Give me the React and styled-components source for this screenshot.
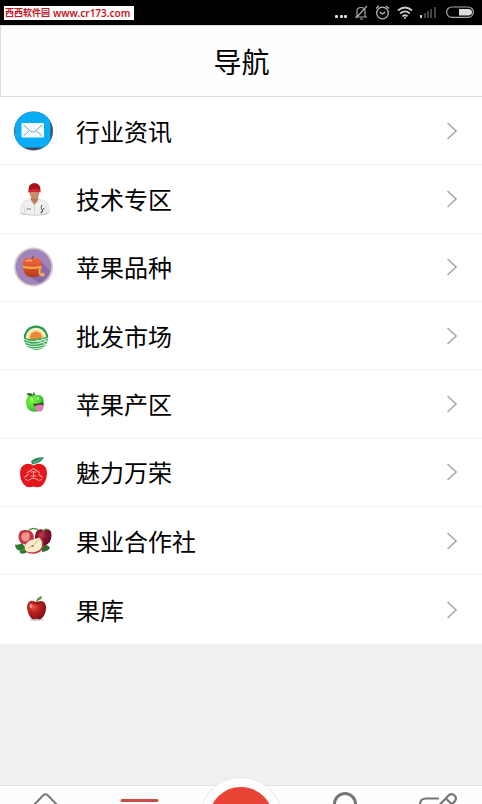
import React from 'react';
import styled, { createGlobalStyle } from 'styled-components';

const GlobalStyle = createGlobalStyle`
  * {
    box-sizing: border-box;
  }
  body {
    margin: 0;
    background-color: #f0f0f0;
    color: #000;
    font-family: 'Noto Sans CJK SC', 'Noto Sans', sans-serif;
  }
  ul,
  h1,
  p {
    margin: 0;
    padding: 0;
  }
`;

const Page = styled.div`
  display: flex;
  flex-direction: column;
  height: 100vh;
  overflow: hidden;
`;

const StatusBar = styled.div`
  display: flex;
  flex-shrink: 0;
  align-items: center;
  justify-content: space-between;
  height: 25px;
  padding: 0 8px 0 4px;
  background-color: #000;
`;

const SiteTag = styled.p`
  display: flex;
  gap: 3px;
  padding: 0 4px 0 1px;
  background-color: #fff;
  color: #c4161c;
  font-family: 'Noto Sans', 'Noto Sans CJK SC', sans-serif;
  font-size: 10px;
  font-weight: 600;
  line-height: 14px;
  white-space: nowrap;
`;

const SiteName = styled.span`
  font-size: 9px;
`;

const StatusIcons = styled.div`
  display: flex;
  align-items: center;
  gap: 7px;
  svg {
    display: block;
  }
`;

const Header = styled.header`
  display: flex;
  flex-shrink: 0;
  align-items: center;
  justify-content: center;
  height: 72px;
  border: 1px solid #dedede;
  border-right: 0;
  background-color: #fefefe;
`;

const Title = styled.h1`
  font-size: 28px;
  font-weight: 400;
  line-height: 40px;
`;

const Main = styled.main`
  flex: 1;
  min-height: 0;
`;

const MenuList = styled.ul`
  display: grid;
  grid-auto-rows: 1fr;
  min-height: 68vh;
  list-style: none;
  background-color: #fff;
`;

const MenuItem = styled.li`
  display: flex;
  border-bottom: 1px solid #efefef;
  &:last-child {
    border-bottom: 0;
  }
`;

const MenuLink = styled.a`
  display: flex;
  flex: 1;
  align-items: center;
  gap: 22px;
  padding: 0 24px 0 14px;
  color: inherit;
  font-size: 24px;
  line-height: 36px;
  text-decoration: none;
  svg {
    flex-shrink: 0;
  }
`;

const MenuName = styled.span`
  flex: 1;
`;

// 아래쪽은 화면 밖으로 이어진다
const TabBar = styled.nav`
  display: grid;
  flex-shrink: 0;
  grid-template-columns: 1fr 1fr 112px 1fr 1fr;
  justify-items: center;
  align-items: start;
  height: 68px;
  margin-bottom: -49px;
  border-top: 1px solid #e2e2e2;
  background-color: #fefefe;
`;

const TabButton = styled.button`
  padding: 6px 0 0;
  border: 0;
  background: none;
  svg {
    display: block;
  }
`;

const CenterButton = styled.button`
  width: 82px;
  height: 82px;
  margin-top: -8px;
  padding: 0;
  border: 9px solid #fefefe;
  border-radius: 50%;
  background-color: #e94335;
  box-shadow: 0 0 0 1px #e9e9e9;
`;

function MailIcon() {
  return (
    <svg width='40' height='40' viewBox='0 0 40 40' aria-hidden='true'>
      <defs>
        <clipPath id='mail-round'>
          <circle cx='19.500' cy='20' r='19.500' />
        </clipPath>
      </defs>
      <g clipPath='url(#mail-round)'>
        <rect width='40' height='40' fill='#3f4d5c' />
        <rect x='1' y='1' width='35.500' height='35.500' fill='#0aadf5' />
        <rect x='7.500' y='12' width='22.500' height='14.500' rx='1' fill='#f4fbff' />
        <path
          d='M9.500 14l7 6.300q2.300 1.800 4.600 0l7-6.300M9.500 24.800l6-5M28.100 24.800l-6-5'
          fill='none'
          stroke='#6d9cb5'
          strokeWidth='0.900'
        />
      </g>
    </svg>
  );
}

function ExpertIcon() {
  return (
    <svg width='40' height='40' viewBox='0 0 40 40' aria-hidden='true'>
      <ellipse cx='20.500' cy='34' rx='14' ry='2.500' fill='#b4b4b4' />
      <path
        d='M6.500 33.500q-.5-7.500 3-11L17 19h7l7.500 3.500q4 3.500 3.500 11-6 2.500-14.500 2.500T6.500 33.500z'
        fill='#f0f0ee'
        stroke='#d6d6d4'
        strokeWidth='0.600'
      />
      <path d='M17 17h7v5l-3.500 4-3.500-4z' fill='#b97c58' />
      <path d='M16 20l4.500 6 4.500-6M20.500 26v9' fill='none' stroke='#ccc' strokeWidth='0.800' />
      <ellipse cx='20.500' cy='14' rx='4.800' ry='6' fill='#c98d66' />
      <path d='M14.500 13q-.8-8.500 6-9 6.800.5 6 9-6-2-12 0z' fill='#a90f1c' />
      <path d='M15 11q6-2.500 11 0l.5 2.500q-6-1.500-12 .2z' fill='#cf2630' />
      <path d='M12.500 30h4.500' stroke='#777' strokeWidth='1' />
      <path d='M28 26q-2 3 0 4.500t-1 4M30 29l-3 5' fill='none' stroke='#555' strokeWidth='1' />
      <path d='M10 27l1 7M31.500 26l1 7' stroke='#ccc' strokeWidth='0.700' />
    </svg>
  );
}

function VarietyIcon() {
  return (
    <svg width='40' height='40' viewBox='0 0 40 40' aria-hidden='true'>
      <defs>
        <linearGradient id='variety-apple' x1='0' y1='0' x2='0' y2='1'>
          <stop offset='0' stopColor='#ee6a3e' />
          <stop offset='.5' stopColor='#d8512c' />
          <stop offset='1' stopColor='#b23a1c' />
        </linearGradient>
      </defs>
      <circle cx='19.500' cy='20' r='19.500' fill='#d5c8c9' />
      <circle cx='19.500' cy='20' r='17.800' fill='#a084bb' />
      <path d='M25 12l11 12q-3 9-11 12L14 28z' fill='#8a6ba6' />
      <path
        d='M18.500 11.500q-6-2-8.500 1-2 3-1 8.500 1 6.500 5 8.500 5 1.500 9 0 4-2 4.500-8.500.8-6-1.500-8.500-3-3-7.500-1z'
        fill='url(#variety-apple)'
      />
      <path d='M18 12q0-2 2-2.500' fill='none' stroke='#7b2d1d' strokeWidth='1' />
      <path d='M12 14.500q3-2 6-.5' fill='none' stroke='#ffa98a' strokeWidth='1.500' />
      <path d='M8.800 18.500q9.200 2.500 18.500.3v2.200q-9.300 2.200-18.300 0z' fill='#f9ab42' />
      <path
        d='M27 20q-2 3-1.500 5.500t3.500 3.500M28 26l2.500 2.500'
        fill='none'
        stroke='#efae62'
        strokeWidth='1.800'
      />
    </svg>
  );
}

function MarketIcon() {
  return (
    <svg width='40' height='40' viewBox='0 0 40 40' aria-hidden='true'>
      <defs>
        <clipPath id='market-round'>
          <circle cx='22' cy='21.500' r='12.200' />
        </clipPath>
      </defs>
      <g clipPath='url(#market-round)'>
        <circle cx='22' cy='21.500' r='12.200' fill='#2b9a4b' />
        <circle cx='22' cy='22' r='10.200' fill='#f8f8d4' />
        <circle cx='22' cy='22' r='8.200' fill='#f9da8f' />
        <circle cx='22' cy='21.500' r='6' fill='#e88a3c' />
        <path d='M8 20.500q7 3.500 14 2.500t14-3V36H8z' fill='#34a853' />
        <path
          d='M8 22.500q8 4 14 3t14-4M9 25.500q8 4 14 2.500t13-4M10 28.500q7 3 13 2t12-3.500M13 31.500q6 2 11 1t9-3M22 24q7 2 12 6M27 22.500q5 2 8 4'
          fill='none'
          stroke='#effae9'
          strokeWidth='0.900'
        />
      </g>
    </svg>
  );
}

function OriginIcon() {
  return (
    <svg width='40' height='40' viewBox='0 0 40 40' aria-hidden='true'>
      <defs>
        <radialGradient id='origin-apple' cx='.35' cy='.35' r='.8'>
          <stop offset='0' stopColor='#8af548' />
          <stop offset='.6' stopColor='#41d42f' />
          <stop offset='1' stopColor='#1c9a2a' />
        </radialGradient>
      </defs>
      <path
        d='M20 11.500q-7-2-8 6 0 9 7 10 8 1 10-5 2-8-2-11-3-1-7 0z'
        fill='url(#origin-apple)'
      />
      <path d='M12.500 10q4-2.500 7 1.500-5 1.500-7-1.500zM19 11.500l.5-4 2 3.500z' fill='#2a6a2e' />
      <circle cx='18' cy='15' r='1.200' fill='#d8ffb0' />
      <circle cx='24' cy='14.500' r='1.200' fill='#b9f59a' />
      <path d='M19 19.500q5 1 10-1.500l.8 3.500q-5 2.500-9.300 1z' fill='#4d4038' />
      <path d='M21 22q4-2 8.500-1 .5 4-2 6-4 1.500-6-1.500z' fill='#d77fb4' />
    </svg>
  );
}

function CharmIcon() {
  return (
    <svg width='40' height='40' viewBox='0 0 40 40' aria-hidden='true'>
      <path
        d='M19.500 13.500q-3-2.500-7.500-1.500Q6 13.500 6 21.500q.5 9 6 13 4 1.500 7.500 0 4 1.500 7.500 0 5.500-4 6-13 0-8-6-9.500-4-1-7.500 1.500z'
        fill='#e2181e'
      />
      <path d='M19 12.500q-1-3 .5-4.500' fill='none' stroke='#3a7a48' strokeWidth='1' />
      <path d='M17 9.500q5-5 13-4-4 7-12 6.500z' fill='#2a8d5c' />
      <path d='M19 10.500q4-1 9-4' fill='none' stroke='#a6dcbf' strokeWidth='0.600' />
      <path
        d='M13 21l6.500-4.500L26 21M10.500 25.500l4-3.500M28.500 25.500l-4-3.500M17 20.500q2.500-2 5 0M16.500 24h6M19.500 19.500v6M15 28q4.500-3.500 9 0M11 27.500l3.500 1M28 27.500l-3.500 1'
        fill='none'
        stroke='#ff9a92'
        strokeWidth='1.100'
      />
    </svg>
  );
}

function CoopIcon() {
  return (
    <svg width='40' height='40' viewBox='0 0 40 40' aria-hidden='true'>
      <defs>
        <radialGradient id='coop-apple' cx='.4' cy='.35' r='.7'>
          <stop offset='0' stopColor='#c23a55' />
          <stop offset='.4' stopColor='#8c1430' />
          <stop offset='1' stopColor='#5c0c20' />
        </radialGradient>
      </defs>
      <path d='M1 23.500q4 1 7-1.500l6 8q-3 4-8 2 .5-3-3-3.500-2-2-2-5z' fill='#2d7a2a' />
      <path d='M28 25q6-2.500 8 2-2 3.500-8 4z' fill='#296f29' />
      <path d='M12 9q-7-1-7.500 6T11 23.500q8 1 9-6Q20 9 12 9z' fill='#c23444' />
      <path d='M9 12q-3 3-1 7 4 3 7-.5 2-5-1-7.500z' fill='#f0938a' />
      <path
        d='M29.500 9q-5-2-7.500 2-2 5 0 9 3 6 9 4.500 6-2 6.500-9.500 0-6-3-6.500t-5 .500z'
        fill='url(#coop-apple)'
      />
      <path d='M15 9q5-3 9 0M29 12q0-3 4-4' fill='none' stroke='#4c8a3c' strokeWidth='1.400' />
      <path
        d='M12 23q3-4 8.500-4.500L26 16q4 3 3.500 9-1 6-7.500 7.500-7 1-10.500-2Q9 27 12 23z'
        fill='#c23b4c'
      />
      <path
        d='M12 23q3-4.500 8-4.500l5-2q3.500 3 3 8-1 5-7 6.500-6 1-9-1-2.500-3.500 0-7z'
        fill='#f8edcb'
      />
      <path d='M14 27.500q5-2 11-9' fill='none' stroke='#cba86e' strokeWidth='0.800' />
      <ellipse cx='18.500' cy='25' rx='1.300' ry='0.700' fill='#9a6437' />
      <path d='M6 30l5-2' stroke='#63a34e' strokeWidth='0.800' />
    </svg>
  );
}

function StoreIcon() {
  return (
    <svg width='40' height='40' viewBox='0 0 40 40' aria-hidden='true'>
      <defs>
        <radialGradient id='store-apple' cx='.35' cy='.35' r='.75'>
          <stop offset='0' stopColor='#e05544' />
          <stop offset='.4' stopColor='#bd211e' />
          <stop offset='1' stopColor='#7d0c10' />
        </radialGradient>
      </defs>
      <ellipse cx='22.500' cy='29.500' rx='7' ry='1.500' fill='#c9c9c9' />
      <path
        d='M22.500 12.500q-4-3-7.500-.5-3 3-1.500 8.500 1.500 6.500 5 8.500 2 .5 4-.3 2 .8 4 .3 4-2 5.300-8.500 1-5.500-1.800-8.500-3.500-2.200-7.500.5z'
        fill='url(#store-apple)'
      />
      <path d='M22.500 13.500q0-3 2-5' fill='none' stroke='#5a3420' strokeWidth='1.200' />
      <path d='M22.500 10.500q1-3.500 5.500-4.500 0 4.500-5.500 4.500z' fill='#4a9a5c' />
      <path d='M19 13q3.500 2 7 0' fill='none' stroke='#8b1012' strokeWidth='1' />
      <ellipse cx='17' cy='16' rx='1.500' ry='2' fill='#f59a88' />
    </svg>
  );
}

function ArrowIcon() {
  return (
    <svg width='12' height='20' viewBox='0 0 12 20' aria-hidden='true'>
      <path d='M1.500 2l8.500 8-8.500 8' fill='none' stroke='#a8a8a8' strokeWidth='1.600' />
    </svg>
  );
}

const menus = [
  { name: '行业资讯', Icon: MailIcon },
  { name: '技术专区', Icon: ExpertIcon },
  { name: '苹果品种', Icon: VarietyIcon },
  { name: '批发市场', Icon: MarketIcon },
  { name: '苹果产区', Icon: OriginIcon },
  { name: '魅力万荣', Icon: CharmIcon },
  { name: '果业合作社', Icon: CoopIcon },
  { name: '果库', Icon: StoreIcon },
];

function PhoneStatus() {
  return (
    <StatusIcons aria-hidden='true'>
      <svg width='14' height='16' viewBox='0 0 14 16' fill='#ddd'>
        <rect x='2' y='10' width='3' height='3' rx='1' />
        <rect x='7' y='10' width='3' height='3' rx='1' />
        <rect x='11' y='10' width='3' height='3' rx='1' />
      </svg>
      <svg width='14' height='16' viewBox='0 0 14 16' fill='none' stroke='#aaa' strokeWidth='1.200'>
        <path d='M1 12h12M3 12V6q0-3.500 4-3.500T11 6v6M6 14h3M13 1L2 13' />
      </svg>
      <svg width='15' height='16' viewBox='0 0 15 16' fill='none' stroke='#bbb' strokeWidth='1.300'>
        <circle cx='7.500' cy='8' r='5.800' />
        <path d='M4.800 7l2.700 2 2.700-2M1 3.500L4 1M14 3.500L11 1' />
      </svg>
      <svg width='16' height='16' viewBox='0 0 16 16' fill='none' stroke='#ccc' strokeWidth='1.800'>
        <path d='M1 5.500q7-6 14 0M3.200 8.500q4.800-4.200 9.600 0M5.500 11.300q2.500-2 5 0' />
        <circle cx='8' cy='13' r='1' fill='#ccc' stroke='none' />
      </svg>
      <svg width='19' height='16' viewBox='0 0 19 16' fill='#444'>
        <rect x='0' y='10' width='2' height='3' fill='#ccc' />
        <rect x='4' y='8' width='2' height='5' />
        <rect x='7' y='6' width='2' height='7' />
        <rect x='10' y='4' width='2' height='9' />
        <rect x='14' y='2' width='2' height='11' />
      </svg>
      <svg width='28' height='16' viewBox='0 0 28 16'>
        <rect x='.6' y='2' width='26.800' height='10.400' rx='5.200' fill='none' stroke='#aaa' strokeWidth='1.200' />
        <path d='M13 4h10q3 .5 3 3.200t-3 3.300H13z' fill='#ddd' />
      </svg>
    </StatusIcons>
  );
}

export default function App() {
  return (
    <Page>
      <GlobalStyle />
      <StatusBar>
        <SiteTag>
          <SiteName>西西软件园</SiteName>
          www.cr173.com
        </SiteTag>
        <PhoneStatus />
      </StatusBar>
      <Header>
        <Title>导航</Title>
      </Header>
      <Main>
        <MenuList>
          {menus.map(({ name, Icon }) => (
            <MenuItem key={name}>
              <MenuLink href='#'>
                <Icon />
                <MenuName>{name}</MenuName>
                <ArrowIcon />
              </MenuLink>
            </MenuItem>
          ))}
        </MenuList>
      </Main>
      <TabBar>
        <TabButton type='button' aria-label='首页'>
          <svg width='40' height='40' viewBox='0 0 40 40' fill='none' stroke='#777' strokeWidth='2'>
            <path d='M3 18L17.500 3q2-1.500 4 0L36 18M8 14v22h24V14' />
          </svg>
        </TabButton>
        <TabButton type='button' aria-label='导航'>
          <svg width='40' height='40' viewBox='0 0 40 40' stroke='#cf4a45' strokeWidth='3' strokeLinecap='round'>
            <path d='M3 8.500h35M3 20.500h35M3 32.500h35' />
          </svg>
        </TabButton>
        <CenterButton type='button' aria-label='发布' />
        <TabButton type='button' aria-label='我的'>
          <svg width='40' height='40' viewBox='0 0 40 40' fill='none' stroke='#777' strokeWidth='3'>
            <circle cx='22' cy='12' r='10.500' />
            <path d='M4 39q2-14 18-14t17 14' />
          </svg>
        </TabButton>
        <TabButton type='button' aria-label='编辑'>
          <svg width='42' height='40' viewBox='0 0 42 40' fill='none' stroke='#777' strokeWidth='2.200'>
            <path d='M24 6.500H11q-6 0-6 6V32q0 5 5 5h19q5 0 5-5V20' />
            <path d='M16 22L34 3q3-2 5.500.5t.5 5.500L22 27l-7 1zM31 6.500l5.500 5.500' />
          </svg>
        </TabButton>
      </TabBar>
    </Page>
  );
}
